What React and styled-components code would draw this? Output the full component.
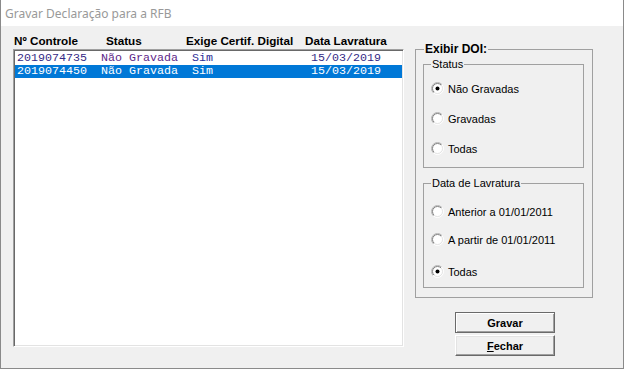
import React from 'react';
import styled, { createGlobalStyle } from 'styled-components';

const Global = createGlobalStyle`
  html, body { margin: 0; padding: 0; background: #fff; }
  body { width: 625px; height: 369px; overflow: hidden; }
  * { box-sizing: border-box; }
`;

const Window = styled.div`
  width: 624px;
  height: 369px;
  border: 1px solid #8a8a8a;
  border-top: none;
  display: flex;
  flex-direction: column;
  background: #f0f0f0;
  font-family: "Liberation Sans", Arial, sans-serif;
`;

const TitleBar = styled.div`
  height: 26px;
  flex: none;
  background: #fff;
  display: flex;
  align-items: center;
  padding-left: 4px;
  color: #999;
  font-family: "Noto Sans", sans-serif;
  font-size: 12px;
`;

const Body = styled.div`
  flex: 1;
  display: flex;
  padding: 8px 0 0 12px;
  gap: 11px;
`;

const LeftCol = styled.div`
  width: 391px;
  display: flex;
  flex-direction: column;
`;

const HeaderRow = styled.div`
  display: flex;
  height: 15px;
  line-height: 14px;
  padding-left: 1px;
  font-weight: bold;
  font-size: 11.7px;
  color: #000;
`;

const HeadCell = styled.div`
  width: ${(p) => p.$w}px;
  flex: none;
  white-space: nowrap;
`;

const ListBox = styled.div`
  height: 298px;
  background: #fff;
  border: 1px solid;
  border-color: #a0a0a0 #fff #fff #a0a0a0;
  box-shadow: inset 1px 1px 0 #696969, inset -1px -1px 0 #e3e3e3;
  padding: 2px 1px 1px 1px;
`;

const Row = styled.div`
  display: flex;
  height: 13px;
  line-height: 13px;
  padding-left: 2px;
  font-family: "Liberation Mono", "Courier New", monospace;
  font-size: 11.67px;
  white-space: pre;
  background: ${(p) => (p.$sel ? '#0078d7' : 'transparent')};
`;

const Cell = styled.span`
  width: ${(p) => p.$ch * 7}px;
  flex: none;
  color: ${(p) => (p.$sel ? '#fff' : p.$c)};
`;

const RightCol = styled.div`
  width: 178px;
  display: flex;
  flex-direction: column;
  padding-top: 8px;
`;

const Group = styled.fieldset`
  margin: ${(p) => p.$mt || 0}px 0 0 0;
  min-inline-size: 0;
  border: 1px solid #a0a0a0;
  padding: 0 ${(p) => p.$pr}px ${(p) => p.$pb}px ${(p) => p.$pl}px;
  display: flex;
  flex-direction: column;
`;

const Legend = styled.legend`
  padding: 0 1px;
  margin-left: ${(p) => p.$ml}px;
  font-size: ${(p) => (p.$bold ? '12px' : '11px')};
  font-weight: ${(p) => (p.$bold ? 'bold' : 'normal')};
  line-height: ${(p) => (p.$bold ? '14px' : '13px')};
  color: #000;
`;

const RadioRow = styled.label`
  display: flex;
  align-items: center;
  gap: 4px;
  height: 13px;
  margin-top: ${(p) => p.$mt}px;
  margin-left: -1px;
  font-size: 11px;
  color: #000;
  white-space: nowrap;
`;

const ButtonStack = styled.div`
  display: flex;
  flex-direction: column;
  align-items: center;
  gap: 2px;
  margin-top: 14px;
  padding-left: 2px;
`;

const Button = styled.button`
  width: 100px;
  height: 21px;
  padding: 0;
  background: #f0f0f0;
  font-family: "Liberation Sans", Arial, sans-serif;
  font-weight: bold;
  font-size: 11px;
  color: #000;
  border: 1px solid;
  border-color: ${(p) => (p.$default ? '#6a6a6a' : '#fff #696969 #696969 #fff')};
  box-shadow: ${(p) =>
    p.$default
      ? 'inset 1px 1px 0 #fff, inset -1px -1px 0 #a0a0a0'
      : 'inset -1px -1px 0 #a0a0a0, inset 1px 1px 0 #e3e3e3'};
  u { text-decoration: underline; }
`;

const Radio = ({ checked, id }) => (
  <svg width="13" height="13" viewBox="0 0 13 13">
    <defs>
      <linearGradient id={`ro${id}`} x1="0" y1="0" x2="1" y2="1">
        <stop offset="0.5" stopColor="#b4b4b4" />
        <stop offset="0.5" stopColor="#ffffff" />
      </linearGradient>
      <linearGradient id={`ri${id}`} x1="0" y1="0" x2="1" y2="1">
        <stop offset="0.5" stopColor="#808080" />
        <stop offset="0.5" stopColor="#e3e3e3" />
      </linearGradient>
    </defs>
    <circle cx="6.5" cy="6.5" r="6" fill="none" stroke={`url(#ro${id})`} />
    <circle cx="6.5" cy="6.5" r="5" fill="#fff" stroke={`url(#ri${id})`} />
    {checked && <circle cx="6.5" cy="6.5" r="2" fill="#000" />}
  </svg>
);

const rows = [
  { code: '2019074735', status: 'Não Gravada', cert: 'Sim', date: '15/03/2019', sel: false },
  { code: '2019074450', status: 'Não Gravada', cert: 'Sim', date: '15/03/2019', sel: true },
];

export default function App() {
  return (
    <>
      <Global />
      <Window>
        <TitleBar>Gravar Declaração para a RFB</TitleBar>
        <Body>
          <LeftCol>
            <HeaderRow>
              <HeadCell $w={92}>Nº Controle</HeadCell>
              <HeadCell $w={80}>Status</HeadCell>
              <HeadCell $w={119}>Exige Certif. Digital</HeadCell>
              <HeadCell $w={90}>Data Lavratura</HeadCell>
            </HeaderRow>
            <ListBox>
              {rows.map((r) => (
                <Row key={r.code} $sel={r.sel}>
                  <Cell $ch={12} $sel={r.sel} $c="#352a86">{r.code}</Cell>
                  <Cell $ch={13} $sel={r.sel} $c="#5e1f88">{r.status}</Cell>
                  <Cell $ch={17} $sel={r.sel} $c="#2c2c96">{r.cert}</Cell>
                  <Cell $ch={10} $sel={r.sel} $c="#352a86">{r.date}</Cell>
                </Row>
              ))}
            </ListBox>
          </LeftCol>
          <RightCol>
            <Group $pl={7} $pr={8} $pb={9}>
              <Legend $ml={1} $bold>Exibir DOI:</Legend>
              <Group $mt={2} $pl={8} $pr={0} $pb={12}>
                <Legend $ml={-1}>Status</Legend>
                <RadioRow $mt={11}><Radio id="a" checked />Não Gravadas</RadioRow>
                <RadioRow $mt={17}><Radio id="b" />Gravadas</RadioRow>
                <RadioRow $mt={17}><Radio id="c" />Todas</RadioRow>
              </Group>
              <Group $mt={9} $pl={8} $pr={0} $pb={9}>
                <Legend $ml={-1}>Data de Lavratura</Legend>
                <RadioRow $mt={15}><Radio id="d" />Anterior a 01/01/2011</RadioRow>
                <RadioRow $mt={15}><Radio id="e" />A partir de 01/01/2011</RadioRow>
                <RadioRow $mt={19}><Radio id="f" checked />Todas</RadioRow>
              </Group>
            </Group>
            <ButtonStack>
              <Button $default>Gravar</Button>
              <Button><u>F</u>echar</Button>
            </ButtonStack>
          </RightCol>
        </Body>
      </Window>
    </>
  );
}
